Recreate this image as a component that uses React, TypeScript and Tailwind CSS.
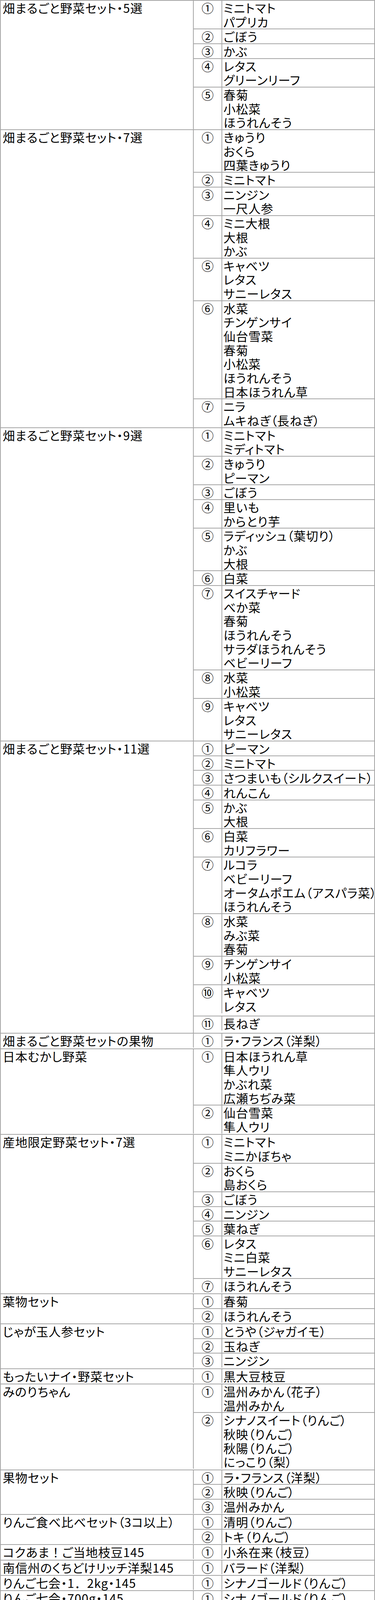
const NUMS = ['①', '②', '③', '④', '⑤', '⑥', '⑦', '⑧', '⑨', '⑩', '⑪'];

type Group = { name: string; items: string[][]; loose?: boolean };

const GROUPS: Group[] = [
  {
    name: '畑まるごと野菜セット・5選',
    items: [
      ['ミニトマト', 'パプリカ'],
      ['ごぼう'],
      ['かぶ'],
      ['レタス', 'グリーンリーフ'],
      ['春菊', '小松菜', 'ほうれんそう'],
    ],
  },
  {
    name: '畑まるごと野菜セット・7選',
    items: [
      ['きゅうり', 'おくら', '四葉きゅうり'],
      ['ミニトマト'],
      ['ニンジン', '一尺人参'],
      ['ミニ大根', '大根', 'かぶ'],
      ['キャベツ', 'レタス', 'サニーレタス'],
      ['水菜', 'チンゲンサイ', '仙台雪菜', '春菊', '小松菜', 'ほうれんそう', '日本ほうれん草'],
      ['ニラ', 'ムキねぎ（長ねぎ）'],
    ],
  },
  {
    name: '畑まるごと野菜セット・9選',
    items: [
      ['ミニトマト', 'ミディトマト'],
      ['きゅうり', 'ピーマン'],
      ['ごぼう'],
      ['里いも', 'からとり芋'],
      ['ラディッシュ（葉切り）', 'かぶ', '大根'],
      ['白菜'],
      ['スイスチャード', 'べか菜', '春菊', 'ほうれんそう', 'サラダほうれんそう', 'ベビーリーフ'],
      ['水菜', '小松菜'],
      ['キャベツ', 'レタス', 'サニーレタス'],
    ],
  },
  {
    name: '畑まるごと野菜セット・11選',
    items: [
      ['ピーマン'],
      ['ミニトマト'],
      ['さつまいも（シルクスイート）'],
      ['れんこん'],
      ['かぶ', '大根'],
      ['白菜', 'カリフラワー'],
      ['ルコラ', 'ベビーリーフ', 'オータムポエム（アスパラ菜）', 'ほうれんそう'],
      ['水菜', 'みぶ菜', '春菊'],
      ['チンゲンサイ', '小松菜'],
      ['キャベツ', 'レタス'],
      ['長ねぎ'],
    ],
  },
  { name: '畑まるごと野菜セットの果物', items: [['ラ・フランス（洋梨）']], loose: true },
  {
    name: '日本むかし野菜',
    items: [
      ['日本ほうれん草', '隼人ウリ', 'かぶれ菜', '広瀬ちぢみ菜'],
      ['仙台雪菜', '隼人ウリ'],
    ],
    loose: true,
  },
  {
    name: '産地限定野菜セット・7選',
    items: [
      ['ミニトマト', 'ミニかぼちゃ'],
      ['おくら', '島おくら'],
      ['ごぼう'],
      ['ニンジン'],
      ['葉ねぎ'],
      ['レタス', 'ミニ白菜', 'サニーレタス'],
      ['ほうれんそう'],
    ],
    loose: true,
  },
  { name: '葉物セット', items: [['春菊'], ['ほうれんそう']], loose: true },
  { name: 'じゃが玉人参セット', items: [['とうや（ジャガイモ）'], ['玉ねぎ'], ['ニンジン']], loose: true },
  { name: 'もったいナイ・野菜セット', items: [['黒大豆枝豆']], loose: true },
  {
    name: 'みのりちゃん',
    items: [
      ['温州みかん（花子）', '温州みかん'],
      ['シナノスイート（りんご）', '秋映（りんご）', '秋陽（りんご）', 'にっこり（梨）'],
    ],
    loose: true,
  },
  { name: '果物セット', items: [['ラ・フランス（洋梨）'], ['秋映（りんご）'], ['温州みかん']], loose: true },
  { name: 'りんご食べ比べセット（3コ以上）', items: [['清明（りんご）'], ['トキ（りんご）']], loose: true },
  { name: 'コクあま！ご当地枝豆145', items: [['小糸在来（枝豆）']], loose: true },
  { name: '南信州のくちどけリッチ洋梨145', items: [['バラード（洋梨）']], loose: true },
  { name: 'りんご七会・1．2kg・145', items: [['シナノゴールド（りんご）']], loose: true },
  { name: 'りんご七会・700g・145', items: [['シナノゴールド（りんご）']], loose: true },
  { name: 'ニッポン旬の果物めぐり常温145', items: [['太秋（柿）']], loose: true },
];

// full-width ！ and ． keep their whole cell in the original, so palt is off for them
function Text({ value }: { value: string }) {
  const parts = value.split(/([！．])/);
  return (
    <>
      {parts.map((p, i) =>
        p === '！' || p === '．' ? (
          <span key={i} className="[font-feature-settings:normal]">
            {p}
          </span>
        ) : (
          p
        ),
      )}
    </>
  );
}

function GroupRow({ group }: { group: Group }) {
  return (
    <div className={group.loose ? 'flex border-b-2 border-[#a6a6a6] pb-[1.7px]' : 'flex border-b-2 border-[#a6a6a6]'}>
      <div className="w-[494px] shrink-0 border-r-2 border-[#a6a6a6] pl-[5px]">
        <div className="h-[35.66px]">
          <Text value={group.name} />
        </div>
      </div>
      <div className="flex flex-1 flex-col">
        {group.items.map((lines, i) => {
          const last = i === group.items.length - 1;
          // ⑩ and ⑪ sit a little taller in the original
          const tall = i >= 9;
          const cls = ['flex', last ? '' : 'border-b-2 border-[#a6a6a6]', tall ? 'pb-[6.5px]' : ''].join(' ');
          return (
            <div key={i} className={cls}>
              <div className="w-[73px] shrink-0 border-r-2 border-[#a6a6a6] text-center tracking-normal">
                <div className="h-[35.66px]">{NUMS[i]}</div>
              </div>
              <div className="flex-1 pl-[3px]">
                {lines.map((line, j) => (
                  <div key={j} className="h-[35.66px]">
                    <Text value={line} />
                  </div>
                ))}
              </div>
            </div>
          );
        })}
      </div>
    </div>
  );
}

export default function App() {
  return (
    <div className="bg-white min-h-screen">
      <div className="w-[960px] border-t-2 border-x-2 border-[#a6a6a6] text-black text-[31px] leading-[35.66px] tracking-[1px] [font-feature-settings:'palt'] font-['Noto_Sans_CJK_JP','Noto_Sans',sans-serif] whitespace-nowrap">
        {GROUPS.map((g, i) => (
          <GroupRow key={i} group={g} />
        ))}
      </div>
    </div>
  );
}
